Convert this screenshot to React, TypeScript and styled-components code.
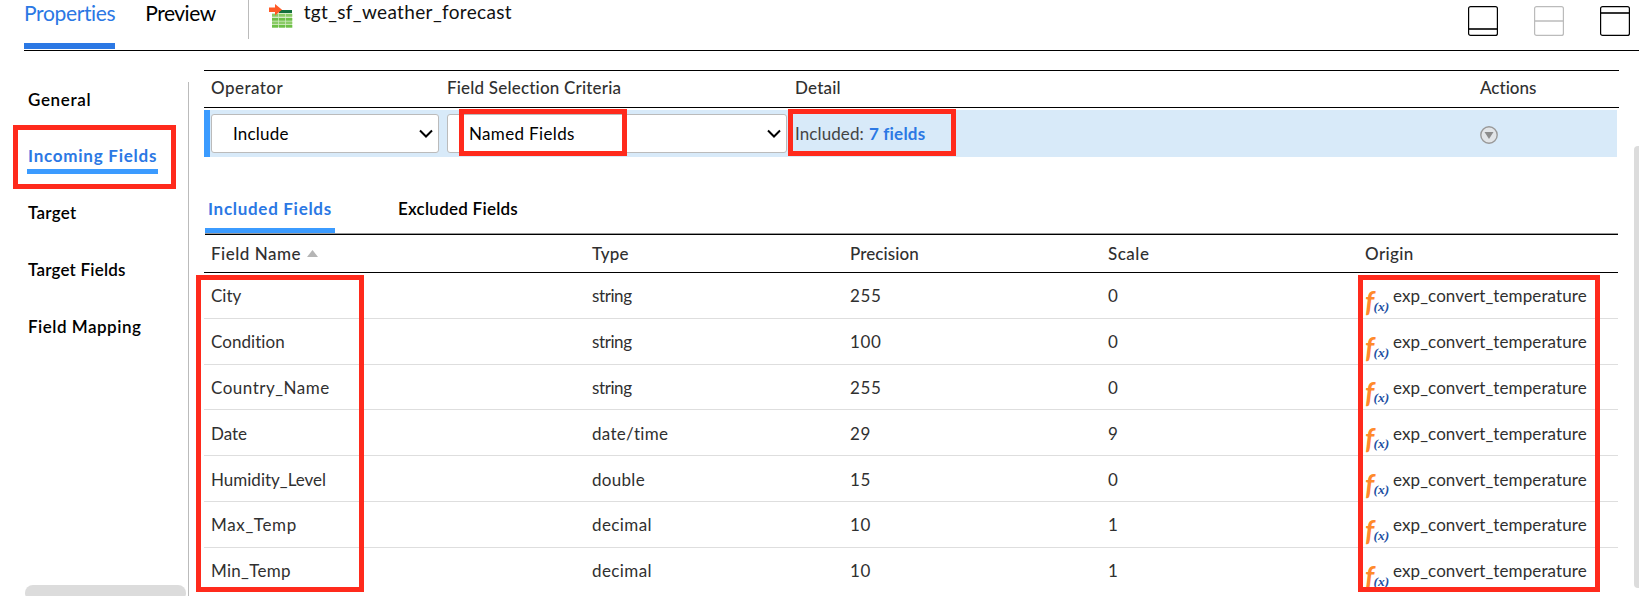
import React from "react";
import styled, { createGlobalStyle } from "styled-components";

const GlobalStyle = createGlobalStyle`
  * { box-sizing: border-box; }
  body { margin: 0; background: #fff; overflow: hidden; }
`;

const Page = styled.div`
  position: relative;
  width: 1639px;
  height: 596px;
  overflow: hidden;
  font: 400 17px/20px Lato, "Liberation Sans", sans-serif;
  font-variant-ligatures: none;
  color: #303030;
  white-space: nowrap;
`;

const Label = styled.span<{ $track?: number }>`
  letter-spacing: ${(p) => p.$track ?? 0.2}px;
`;

const TopBar = styled.header`
  display: flex;
  height: 51px;
  margin-left: 24px;
  border-bottom: 1px solid #000;
`;

const TopTab = styled.div<{ $active?: boolean }>`
  height: 49px;
  margin-right: 30px;
  font-size: 21px;
  line-height: 26px;
  color: ${(p) => (p.$active ? "#2b78e4" : "#000")};
  border-bottom: 6px solid ${(p) => (p.$active ? "#2b78e4" : "transparent")};
`;

const Divider = styled.div`
  width: 1px;
  height: 39px;
  margin-left: 2px;
  background: #bbb;
`;

const ObjectName = styled.div`
  display: flex;
  gap: 11px;
  margin-left: 20px;
  font-size: 19px;
  line-height: 23px;
  color: #111;
  svg { margin-top: 4px; }
`;

const LayoutButtons = styled.div`
  display: flex;
  gap: 36px;
  margin: 6px 9px 0 auto;
`;

const Body = styled.div`
  display: flex;
  height: 545px;
  > * { flex-shrink: 0; }
`;

const Sidebar = styled.nav`
  display: flex;
  flex-direction: column;
  width: 188px;
  padding: 20.2px 0 0 28px;
`;

const SideItem = styled.div<{ $active?: boolean }>`
  position: relative;
  display: flex;
  align-items: center;
  height: 56.8px;
  font-weight: ${(p) => (p.$active ? 700 : 600)};
  color: ${(p) => (p.$active ? "#2b78e4" : "#000")};
`;

const SideUnderline = styled.div`
  position: absolute;
  left: -1px;
  bottom: 11px;
  width: 131px;
  height: 5px;
  background: #3b9bff;
`;

const SideScroll = styled.div`
  width: 161px;
  height: 16px;
  margin: auto 0 -5px -3px;
  border-radius: 8px;
  background: #dcdcdc;
`;

const SideRule = styled.div`
  width: 1px;
  margin-top: 31px;
  background: #bbb;
`;

const Main = styled.main`
  width: 1415px;
  margin-left: 15px;
  padding-top: 19px;
`;

const RuleHead = styled.div`
  display: grid;
  grid-template-columns: 236px 348px 685px 1fr;
  align-items: center;
  height: 38px;
  padding: 0 0 3px 7px;
  border-top: 1px solid #000;
  border-bottom: 1px solid #000;
  font-weight: 500;
`;

const RuleRow = styled.div`
  display: grid;
  grid-template-columns: 228px 340px 677px 1fr;
  column-gap: 8px;
  align-items: center;
  width: 1413px;
  height: 47px;
  margin-top: 2px;
  padding-left: 1px;
  border-left: 6px solid #3b9bff;
  background: #d8eaf9;
`;

const Select = styled.div`
  display: flex;
  align-items: center;
  justify-content: space-between;
  height: 39px;
  padding: 0 5px 0 21px;
  border: 1px solid #bbb;
  border-radius: 3px;
  background: #fff;
  color: #000;
`;

const Detail = styled.div`
  color: #444;
`;

const Link = styled.span`
  margin-left: 5px;
  font-weight: 700;
  color: #2b78e4;
`;

const SubTabs = styled.div`
  display: flex;
  gap: 60px;
  width: 1413px;
  height: 78px;
  margin-left: 1px;
  border-bottom: 1px solid #000;
  box-shadow: inset 0 -1px #999;
`;

const SubTab = styled.div<{ $active?: boolean }>`
  width: 130px;
  height: 76px;
  padding: 42px 0 0 3px;
  font-weight: ${(p) => (p.$active ? 700 : 600)};
  color: ${(p) => (p.$active ? "#2b78e4" : "#000")};
  border-bottom: 5px solid ${(p) => (p.$active ? "#3b9bff" : "transparent")};
`;

const FieldRow = styled.div<{ $head?: boolean }>`
  display: grid;
  grid-template-columns: 381px 258px 258px 257px 1fr;
  align-items: center;
  width: 1414px;
  height: ${(p) => (p.$head ? 38 : 45.8)}px;
  padding: ${(p) => (p.$head ? 0 : 2)}px 0 0 7px;
  border-bottom: 1px solid ${(p) => (p.$head ? "#000" : "#dedede")};
  font-weight: ${(p) => (p.$head ? 500 : 400)};
  &:last-child { border-bottom-color: transparent; }
`;

const SortCell = styled.div`
  display: flex;
  align-items: center;
  gap: 6px;
`;

const Origin = styled.div`
  display: flex;
  gap: 4px;
  align-items: center;
  height: 30px;
  svg { margin-top: 13px; overflow: visible; }
`;

const Scrollbar = styled.div`
  width: 10px;
  height: 442px;
  margin: 95px 0 0 15px;
  border-radius: 4px;
  background: #dcdcdc;
`;

const Highlight = styled.div<{ $x: number; $y: number; $w: number; $h: number }>`
  position: absolute;
  left: ${(p) => p.$x}px;
  top: ${(p) => p.$y}px;
  width: ${(p) => p.$w}px;
  height: ${(p) => p.$h}px;
  border: 5px solid #ff2a1c;
`;

const TableIcon = () => (
  <svg width="24" height="24" viewBox="0 0 24 24">
    <rect x="3" y="9" width="20" height="14" fill="#d5ecc6" />
    <rect x="10" y="6" width="13" height="3" fill="#14713d" />
    {[10, 14, 17.5, 21].map((y, i) =>
      [3, 10, 17].map((x) => (
        <rect key={`${x}-${y}`} x={x} y={y} width="6.300" height="2.700" fill={i % 2 ? "#6cbf45" : "#8acb66"} />
      ))
    )}
    <path d="M0 3.500h6V0l7 5.700-7 5.700V8H0z" fill="#ff5a26" />
  </svg>
);

const PaneIcon = ({ line, muted }: { line: number; muted?: boolean }) => (
  <svg width="30" height="30" viewBox="0 0 30 30" fill="none">
    <path d={`M1 ${line}h28`} stroke={muted ? "#ccc" : "#333"} strokeWidth="2" />
    <rect x=".6" y=".6" width="28.800" height="28.800" rx="2" stroke={muted ? "#bbb" : "#000"} strokeWidth="1.200" />
  </svg>
);

const Chevron = () => (
  <svg width="14" height="10" viewBox="0 0 14 10" fill="none">
    <path d="M1 1.500l6 6 6-6" stroke="#000" strokeWidth="2" />
  </svg>
);

const MenuIcon = () => (
  <svg width="18" height="18" viewBox="0 0 18 18">
    <circle cx="9" cy="9" r="8.200" fill="#e2e5e8" stroke="#999" strokeWidth="1.400" />
    <path d="M4.500 6h9L9 13z" fill="#8c8c8c" />
  </svg>
);

const MenuCell = styled.div`
  display: flex;
  padding-top: 3px;
`;

const FxIcon = () => (
  <svg width="24" height="24" viewBox="0 0 24 24">
    <text x="0" y="20.500" fontFamily="Lato" fontWeight="700" fontStyle="italic" fontSize="28" fill="#ff8a2b">f</text>
    <text x="8.500" y="20" fontFamily="Liberation Serif" fontWeight="700" fontStyle="italic" fontSize="13.500" fill="#1d4fa3">(x)</text>
  </svg>
);

type Field = { name: string; track: number; type: string; typeTrack: number; precision: string; scale: string };

const fields: Field[] = [
  { name: "City", track: 0, type: "string", typeTrack: -0.4, precision: "255", scale: "0" },
  { name: "Condition", track: 0.05, type: "string", typeTrack: -0.4, precision: "100", scale: "0" },
  { name: "Country_Name", track: 0.5, type: "string", typeTrack: -0.4, precision: "255", scale: "0" },
  { name: "Date", track: -0.03, type: "date/time", typeTrack: 0.3, precision: "29", scale: "9" },
  { name: "Humidity_Level", track: 0, type: "double", typeTrack: 0.3, precision: "15", scale: "0" },
  { name: "Max_Temp", track: 0.65, type: "decimal", typeTrack: 0.4, precision: "10", scale: "1" },
  { name: "Min_Temp", track: 0.3, type: "decimal", typeTrack: 0.4, precision: "10", scale: "1" },
];

const sections = [
  { text: "General", track: 0.65 },
  { text: "Incoming Fields", track: 0.75, active: true },
  { text: "Target", track: 0.3 },
  { text: "Target Fields", track: 0.2 },
  { text: "Field Mapping", track: 0.5 },
];

export default function App() {
  return (
    <Page>
      <GlobalStyle />
      <TopBar>
        <TopTab $active><Label $track={-0.35}>Properties</Label></TopTab>
        <TopTab><Label $track={-0.5}>Preview</Label></TopTab>
        <Divider />
        <ObjectName>
          <TableIcon />
          <Label $track={0.35}>tgt_sf_weather_forecast</Label>
        </ObjectName>
        <LayoutButtons>
          <PaneIcon line={23} />
          <PaneIcon line={15} muted />
          <PaneIcon line={7} />
        </LayoutButtons>
      </TopBar>
      <Body>
        <Sidebar>
          {sections.map((s) => (
            <SideItem key={s.text} $active={s.active}>
              <Label $track={s.track}>{s.text}</Label>
              {s.active && <SideUnderline />}
            </SideItem>
          ))}
          <SideScroll />
        </Sidebar>
        <SideRule />
        <Main>
          <RuleHead>
            <Label $track={0.45}>Operator</Label>
            <Label>Field Selection Criteria</Label>
            <Label>Detail</Label>
            <Label $track={0}>Actions</Label>
          </RuleHead>
          <RuleRow>
            <Select><Label>Include</Label><Chevron /></Select>
            <Select><Label $track={0.35}>Named Fields</Label><Chevron /></Select>
            <Detail><Label $track={0.1}>Included:</Label><Link><Label>7 fields</Label></Link></Detail>
            <MenuCell><MenuIcon /></MenuCell>
          </RuleRow>
          <SubTabs>
            <SubTab $active><Label $track={0.7}>Included Fields</Label></SubTab>
            <SubTab><Label $track={0.25}>Excluded Fields</Label></SubTab>
          </SubTabs>
          <FieldRow $head>
            <SortCell>
              <Label $track={0.5}>Field Name</Label>
              <svg width="11" height="7" viewBox="0 0 11 7"><path d="M5.500 0L11 7H0z" fill="#b5b5b5" /></svg>
            </SortCell>
            <Label>Type</Label>
            <Label $track={0.1}>Precision</Label>
            <Label $track={0.5}>Scale</Label>
            <Label $track={0.4}>Origin</Label>
          </FieldRow>
          {fields.map((f) => (
            <FieldRow key={f.name}>
              <Label $track={f.track}>{f.name}</Label>
              <Label $track={f.typeTrack}>{f.type}</Label>
              <Label $track={0.6}>{f.precision}</Label>
              <Label>{f.scale}</Label>
              <Origin><FxIcon /><Label $track={0.1}>exp_convert_temperature</Label></Origin>
            </FieldRow>
          ))}
        </Main>
        <Scrollbar />
      </Body>
      <Highlight $x={13} $y={125} $w={163} $h={64} />
      <Highlight $x={459} $y={109} $w={168} $h={47} />
      <Highlight $x={788} $y={109} $w={168} $h={47} />
      <Highlight $x={196} $y={275} $w={168} $h={317} />
      <Highlight $x={1358} $y={275} $w={242} $h={317} />
    </Page>
  );
}
